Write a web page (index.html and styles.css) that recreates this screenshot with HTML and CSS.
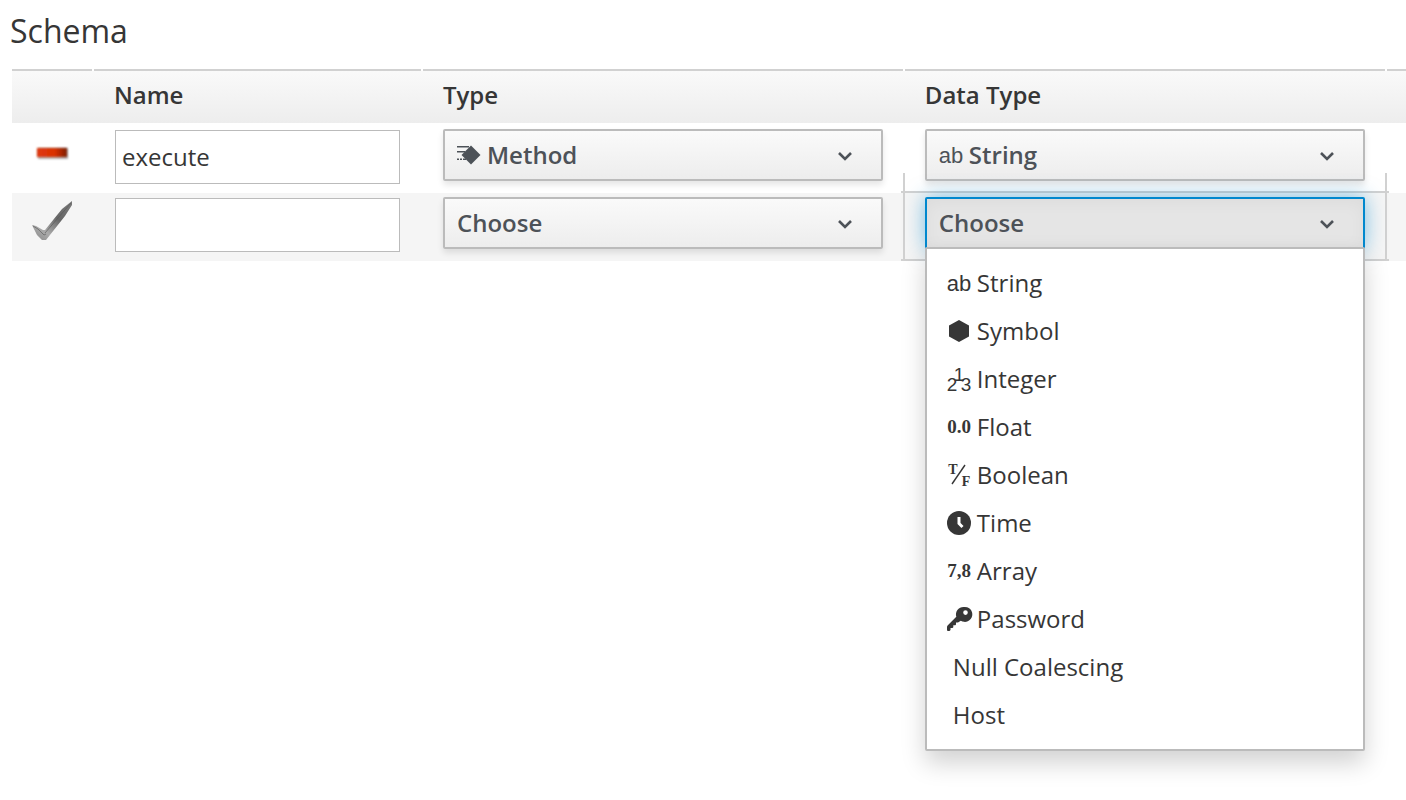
FILE: index.html
```html
<!DOCTYPE html>
<html lang="en">
<head>
<meta charset="utf-8">
<title>Schema</title>
<link rel="stylesheet" href="styles.css">
</head>
<body>
<main class="page">
  <h1 class="title">Schema</h1>
  <table class="schema">
    <colgroup><col class="col-action"><col class="col-name"><col class="col-type"><col class="col-type"><col></colgroup>
    <thead>
      <tr><th></th><th scope="col">Name</th><th scope="col">Type</th><th scope="col">Data Type</th><th></th></tr>
    </thead>
    <tbody>
      <tr class="row">
        <td class="action">
          <button class="icon-button" type="button" aria-label="Remove field">
            <svg width="40" height="40" viewBox="0 0 40 40">
              <defs>
                <linearGradient id="red"><stop offset="0" stop-color="#e0390f"/><stop offset=".6" stop-color="#d93000"/><stop offset="1" stop-color="#7c1c04"/></linearGradient>
                <filter id="soft" x="-20%" y="-50%" width="140%" height="200%"><feGaussianBlur stdDeviation="1.2"/></filter>
                <filter id="edge" x="-10%" y="-20%" width="120%" height="140%"><feGaussianBlur stdDeviation=".8"/></filter>
              </defs>
              <rect x="6" y="15" width="30" height="11" fill="#666" opacity=".5" filter="url(#soft)"/>
              <rect x="5" y="15" width="30" height="9" fill="url(#red)" filter="url(#edge)"/>
            </svg>
          </button>
        </td>
        <td><div class="field"><input class="text" type="text" value="execute" aria-label="Name"></div></td>
        <td>
          <div class="picker">
            <svg class="icon" viewBox="0 0 24 24"><path d="M14 2.500L23.500 12 14 21.500 4.500 12z"/><path d="M0 3h12v1.500H0zM0 8h8v1.500H0zM0 15.500h2v1.500H0zM3 15.500h2v1.500h-2zM6 15.500h3v1.500H6z"/></svg>
            <select class="select" aria-label="Type"><option>Method</option><option>Attribute</option></select>
            <svg class="chevron" viewBox="0 0 16 16"><path d="M2 6l6 6 6-6"/></svg>
          </div>
        </td>
        <td>
          <div class="picker">
            <svg class="icon" viewBox="0 0 24 24"><text x="12" y="20" class="sans">ab</text></svg>
            <select class="select" aria-label="Data Type"><option>String</option><option>Symbol</option></select>
            <svg class="chevron" viewBox="0 0 16 16"><path d="M2 6l6 6 6-6"/></svg>
          </div>
        </td>
        <td></td>
      </tr>
      <tr class="row row-new">
        <td class="action">
          <button class="icon-button" type="button" aria-label="Save field">
            <svg width="40" height="40" viewBox="0 0 40 40">
              <defs><linearGradient id="steel" x1="0" y1="1" x2=".8" y2="0"><stop offset="0" stop-color="#888"/><stop offset=".3" stop-color="#aaa"/><stop offset=".65" stop-color="#666"/><stop offset="1" stop-color="#777"/></linearGradient></defs>
              <path d="M0 24L4 25 11 29 13 29 30 8 40 0V4L33 15 14 39H10L5 34z" fill="url(#steel)"/>
              <path d="M1 25l5 3 6 6 2-1M13 32L39 2" fill="none" stroke="#555" stroke-width="1" opacity=".6"/>
            </svg>
          </button>
        </td>
        <td><div class="field"><input class="text" type="text" aria-label="Name"></div></td>
        <td>
          <div class="picker">
            <select class="select" aria-label="Type"><option>Choose</option><option>Method</option></select>
            <svg class="chevron" viewBox="0 0 16 16"><path d="M2 6l6 6 6-6"/></svg>
          </div>
        </td>
        <td class="active">
          <span class="outline-rows"></span><span class="outline-sides"></span>
          <div class="dropdown">
            <button class="picker picker-open" type="button" aria-haspopup="listbox" aria-expanded="true" aria-controls="types">
              <span class="picker-label">Choose</span>
              <svg class="chevron" viewBox="0 0 16 16"><path d="M2 6l6 6 6-6"/></svg>
            </button>
            <ul class="menu" id="types" role="listbox" aria-label="Data Type">
              <li class="item" role="option"><svg class="icon" viewBox="0 0 24 24"><text x="12" y="20" class="sans">ab</text></svg>String</li>
              <li class="item" role="option"><svg class="icon" viewBox="0 0 24 24"><path d="M12 1l10 5.500v11L12 23 2 17.500v-11z"/></svg>Symbol</li>
              <li class="item" role="option"><svg class="icon" viewBox="0 0 24 24"><text x="5" y="24" class="digit">2</text><text x="12" y="14" class="digit">1</text><text x="19" y="24" class="digit">3</text></svg>Integer</li>
              <li class="item" role="option"><svg class="icon" viewBox="0 0 24 24"><text x="12" y="18" class="bold">0.0</text></svg>Float</li>
              <li class="item" role="option"><svg class="icon" viewBox="0 0 24 24"><text x="6" y="11" class="bold small">T</text><text x="19" y="23" class="bold small">F</text><path d="M18 2L5 21" stroke="currentColor" stroke-width="1.400"/></svg>Boolean</li>
              <li class="item" role="option"><svg class="icon" viewBox="0 0 24 24"><circle cx="12" cy="12" r="12"/><path d="M12 6v6.500l3.500 3.500" fill="none" stroke="#fff" stroke-width="3"/></svg>Time</li>
              <li class="item" role="option"><svg class="icon" viewBox="0 0 24 24"><text x="12" y="18" class="bold">7,8</text></svg>Array</li>
              <li class="item" role="option"><svg class="icon" viewBox="0 0 24 24"><path fill-rule="evenodd" d="M16.500 0A7.500 7.500 0 0 0 9.300 9.800L.6 18.500Q0 19 0 20v3q0 1 1 1h1.500l1-1v-2h2l.8-.8v-2h2l.7-.7v-2h2l2.800-1.800A7.500 7.500 0 1 0 16.500 0zM18.500 3.300a2.300 2.300 0 1 1 0 4.600 2.300 2.300 0 0 1 0-4.600z"/></svg>Password</li>
              <li class="item item-plain" role="option">Null Coalescing</li>
              <li class="item item-plain" role="option">Host</li>
            </ul>
          </div>
        </td>
        <td></td>
      </tr>
    </tbody>
  </table>
</main>
</body>
</html>
```
FILE: styles.css
```css
* { box-sizing: border-box; }
body {
  min-height: 100vh;
  margin: 0;
  background: #fff;
  color: #363636;
  font: 24px/32px "Open Sans", sans-serif;
}
.page { padding: 9px 0 50px 12px; }
.title { margin: 0 0 16px -2px; font-size: 32px; line-height: 44px; font-weight: 400; }

.schema { width: 100%; table-layout: fixed; border-collapse: collapse; }
.col-action { width: 82px; }
.col-name { width: 23.6%; }
.col-type { width: 34.57%; }
.schema th {
  height: 54px;
  padding: 0 20px 2px;
  text-align: left;
  font-weight: 600;
  background:
    linear-gradient(#d1d1d1, #d1d1d1) 0 0 / calc(100% - 2px) 2px no-repeat,
    linear-gradient(#fff, #fff) 0 0 / 100% 2px no-repeat,
    linear-gradient(#fafafa, #ededed);
}
.schema td { padding: 6px 22px 9px 20px; vertical-align: top; }
.schema td:last-child, .schema th:last-child { padding: 0; }
.schema th:last-child {
  background:
    linear-gradient(#d1d1d1, #d1d1d1) 0 0 / 100% 2px no-repeat,
    linear-gradient(#fafafa, #ededed);
}
.row-new { background: #f5f5f5; }
.schema .row-new td { padding-top: 4px; }
.schema .action { padding-right: 20px; }

.icon-button { display: block; width: 40px; height: 48px; padding: 4px 0; border: 0; background: none; }
.icon-button svg { display: block; }

.field { padding: 1px 1px 0; }
.text {
  display: block;
  width: 100%;
  height: 54px;
  padding: 0 6px 2px;
  border: 1px solid #bbb;
  background: #fff;
  color: inherit;
  font: inherit;
}

.picker {
  display: flex;
  align-items: center;
  gap: 6px;
  width: 100%;
  height: 52px;
  padding: 0 28px 0 12px;
  border: 2px solid #bbb;
  border-radius: 2px;
  background: linear-gradient(#fafafa, #ededed);
  box-shadow: 0 4px 6px rgba(3, 3, 3, .1);
  color: #4d5258;
  font: 600 24px/32px "Open Sans", sans-serif;
  text-align: left;
}
.select {
  flex: 1;
  min-width: 0;
  padding: 0;
  border: 0;
  appearance: none;
  background: none;
  color: inherit;
  font: inherit;
}
.picker-label { flex: 1; }
.picker-open {
  border-color: #0088ce;
  background: #e5e5e5;
  box-shadow: inset 0 4px 16px rgba(3, 3, 3, .04), 0 0 20px rgba(0, 136, 206, .5);
}
.chevron { flex: none; width: 16px; height: 16px; fill: none; stroke: currentColor; stroke-width: 2.6; }
.icon { flex: none; width: 24px; height: 24px; overflow: visible; fill: currentColor; }
.icon text { text-anchor: middle; }
.sans { font: 400 22px "Liberation Sans", sans-serif; }
.digit { font: 400 19px "Liberation Sans", sans-serif; }
.bold { font: 700 19px "Liberation Serif", serif; }
.small { font-size: 14px; }

.active { position: relative; }
.outline-rows {
  position: absolute;
  inset: -2px -2px 0 -4px;
  border: solid #d1d1d1;
  border-width: 2px 0;
}
.outline-sides {
  position: absolute;
  inset: -20px 0 0 -2px;
  border: solid #d1d1d1;
  border-width: 0 2px;
}
.dropdown { position: relative; }
.menu {
  position: absolute;
  top: 50px;
  left: 0;
  right: 0;
  margin: 0;
  padding: 10px 0;
  list-style: none;
  border: 2px solid #bbb;
  border-radius: 2px;
  background: #fff;
  box-shadow: 0 12px 24px rgba(0, 0, 0, .18);
}
.item { display: flex; align-items: center; gap: 6px; height: 48px; padding: 0 20px; }
.item-plain { padding-left: 26px; }
```
